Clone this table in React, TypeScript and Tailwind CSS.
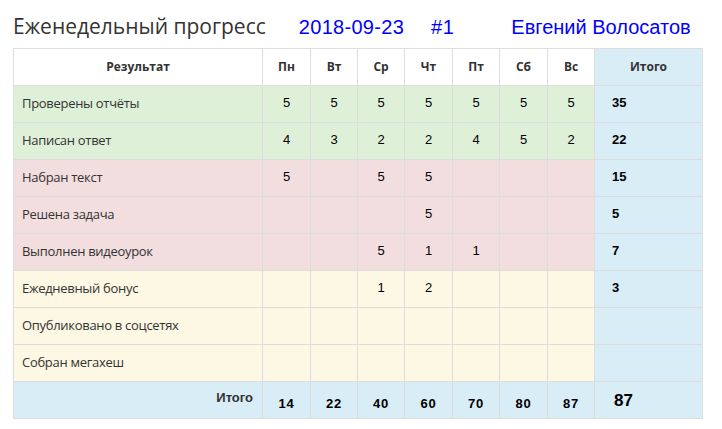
import React from "react";

type Row = { name: string; vals: (number | null)[]; total: number | null; tone: "green" | "red" | "yellow" };

const days = ["Пн", "Вт", "Ср", "Чт", "Пт", "Сб", "Вс"];

const rows: Row[] = [
  { name: "Проверены отчёты", vals: [5, 5, 5, 5, 5, 5, 5], total: 35, tone: "green" },
  { name: "Написан ответ", vals: [4, 3, 2, 2, 4, 5, 2], total: 22, tone: "green" },
  { name: "Набран текст", vals: [5, null, 5, 5, null, null, null], total: 15, tone: "red" },
  { name: "Решена задача", vals: [null, null, null, 5, null, null, null], total: 5, tone: "red" },
  { name: "Выполнен видеоурок", vals: [null, null, 5, 1, 1, null, null], total: 7, tone: "red" },
  { name: "Ежедневный бонус", vals: [null, null, 1, 2, null, null, null], total: 3, tone: "yellow" },
  { name: "Опубликовано в соцсетях", vals: [null, null, null, null, null, null, null], total: null, tone: "yellow" },
  { name: "Собран мегахеш", vals: [null, null, null, null, null, null, null], total: null, tone: "yellow" },
];

const totals = [14, 22, 40, 60, 70, 80, 87];

const toneBg = {
  green: "bg-[#dff0d8]",
  red: "bg-[#f2dede]",
  yellow: "bg-[#fcf8e3]",
};

const dayW = ["w-[48px]", "w-[47px]", "w-[47px]", "w-[48px]", "w-[47px]", "w-[48px]", "w-[47px]"];

export default function App() {
  return (
    <div className="w-[722px] h-[429px] bg-white pl-[13px] pt-[10px] text-[#333]" style={{ fontFamily: "'Open Sans', 'Noto Sans', sans-serif" }}>
      <div className="flex items-baseline h-[38px] pt-[2px]">
        <h3 className="text-[21px] leading-[28px] text-[#333]">Еженедельный прогресс</h3>
        <div className="flex items-baseline text-[20px] text-[#0000ff] font-['Liberation_Sans',Arial,sans-serif]">
          <span className="ml-[33px] tracking-[0.3px]">2018-09-23</span>
          <span className="ml-[27px] tracking-[0.5px]">#1</span>
          <span className="ml-[57px]">Евгений Волосатов</span>
        </div>
      </div>
      <table className="w-[689px] border-collapse table-fixed">
        <thead>
          <tr className="h-[37px] text-[12px] font-bold">
            <th className="w-[249px] border border-[#ddd] text-center">Результат</th>
            {days.map((d, i) => (
              <th key={d} className={`${dayW[i]} border border-[#ddd] text-center`}>{d}</th>
            ))}
            <th className="w-[108px] border border-[#ddd] bg-[#d9edf7] text-center">Итого</th>
          </tr>
        </thead>
        <tbody>
          {rows.map((r) => (
            <tr key={r.name} className={`h-[37px] ${toneBg[r.tone]}`}>
              <td className="border border-[#ddd] pl-[8px] text-[13px] tracking-[-0.3px]">{r.name}</td>
              {r.vals.map((v, i) => (
                <td key={i} className="border border-[#ddd] text-center text-[13px] pb-[3px] font-['Liberation_Sans',Arial,sans-serif] text-black">
                  {v ?? ""}
                </td>
              ))}
              <td className="border border-[#ddd] bg-[#d9edf7] pl-[17px] pb-[3px] text-[13px] font-bold font-['Liberation_Sans',Arial,sans-serif] text-black">
                {r.total ?? ""}
              </td>
            </tr>
          ))}
          <tr className="h-[37px] bg-[#d9edf7] font-['Liberation_Sans',Arial,sans-serif] font-bold">
            <td className="border border-[#ddd] text-right pr-[9px] pb-[5px] text-[13px] text-[#333]">Итого</td>
            {totals.map((t, i) => (
              <td key={i} className="border border-[#ddd] text-center pt-[7px] text-[13px] tracking-[0.8px] text-black">{t}</td>
            ))}
            <td className="border border-[#ddd] pl-[19px] pt-[1px] text-[17px] text-black">87</td>
          </tr>
        </tbody>
      </table>
    </div>
  );
}
